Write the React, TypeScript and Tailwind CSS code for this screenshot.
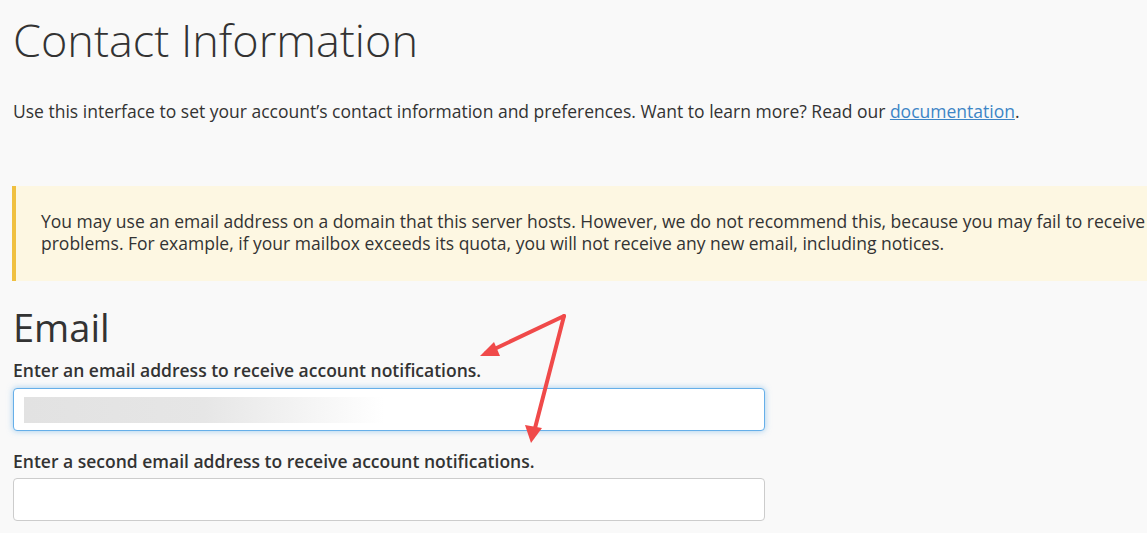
import React from "react";

const App = () => {
  return (
    <div className="relative w-[1147px] h-[533px] overflow-hidden bg-[#f9f9f9] text-[#333] font-['Open_Sans',sans-serif]">
      <div className="pl-[13px] pt-[13px]">
        <h1 className="text-[45px] leading-[54px] font-light text-[#333]">Contact Information</h1>
        <p className="mt-[32px] text-[17.5px] leading-[24px] text-[#333]">
          Use this interface to set your account’s contact information and preferences. Want to learn more? Read our{" "}
          <a href="#" className="text-[#3d85c6] underline">documentation</a>.
        </p>
      </div>

      <div className="mt-[63px] ml-[12px] w-[1200px] h-[95px] border-l-4 border-[#f0c040] bg-[#fdf7e2] pl-[25px] pt-[24px] text-[17.5px] leading-[22px] text-[#333] whitespace-nowrap">
        <div>You may use an email address on a domain that this server hosts. However, we do not recommend this, because you may fail to receive</div>
        <div>problems. For example, if your mailbox exceeds its quota, you will not receive any new email, including notices.</div>
      </div>

      <div className="pl-[13px] pt-[24px]">
        <h2 className="text-[38px] leading-[44px] text-[#333]">Email</h2>
        <label className="block mt-[9px] text-[17.5px] leading-[24px] font-semibold text-[#333]">
          Enter an email address to receive account notifications.
        </label>
        <div className="mt-[6px] w-[752px] h-[43px] rounded-[4px] border border-[#66afe9] bg-white shadow-[0_0_6px_rgba(102,175,233,0.6)] flex items-center pl-[10px]">
          <div className="w-[360px] h-[26px] bg-gradient-to-r from-[#e2e2e2] via-[#e6e6e6] to-white" />
        </div>
        <label className="block mt-[18px] text-[17.5px] leading-[24px] font-semibold text-[#333]">
          Enter a second email address to receive account notifications.
        </label>
        <div className="mt-[5px] w-[752px] h-[43px] rounded-[4px] border border-[#ccc] bg-white" />
      </div>

      <svg className="absolute left-0 top-0 pointer-events-none" width="1147" height="533">
        <g stroke="#f04a4a" strokeWidth="4" fill="#f04a4a" strokeLinecap="round">
          <line x1="564" y1="316" x2="486" y2="353" />
          <polygon points="480,356 494,342 500,356" stroke="none" />
          <line x1="564" y1="316" x2="534" y2="432" />
          <polygon points="531,443 525,425 542,428" stroke="none" />
        </g>
      </svg>
    </div>
  );
};

export default App;
